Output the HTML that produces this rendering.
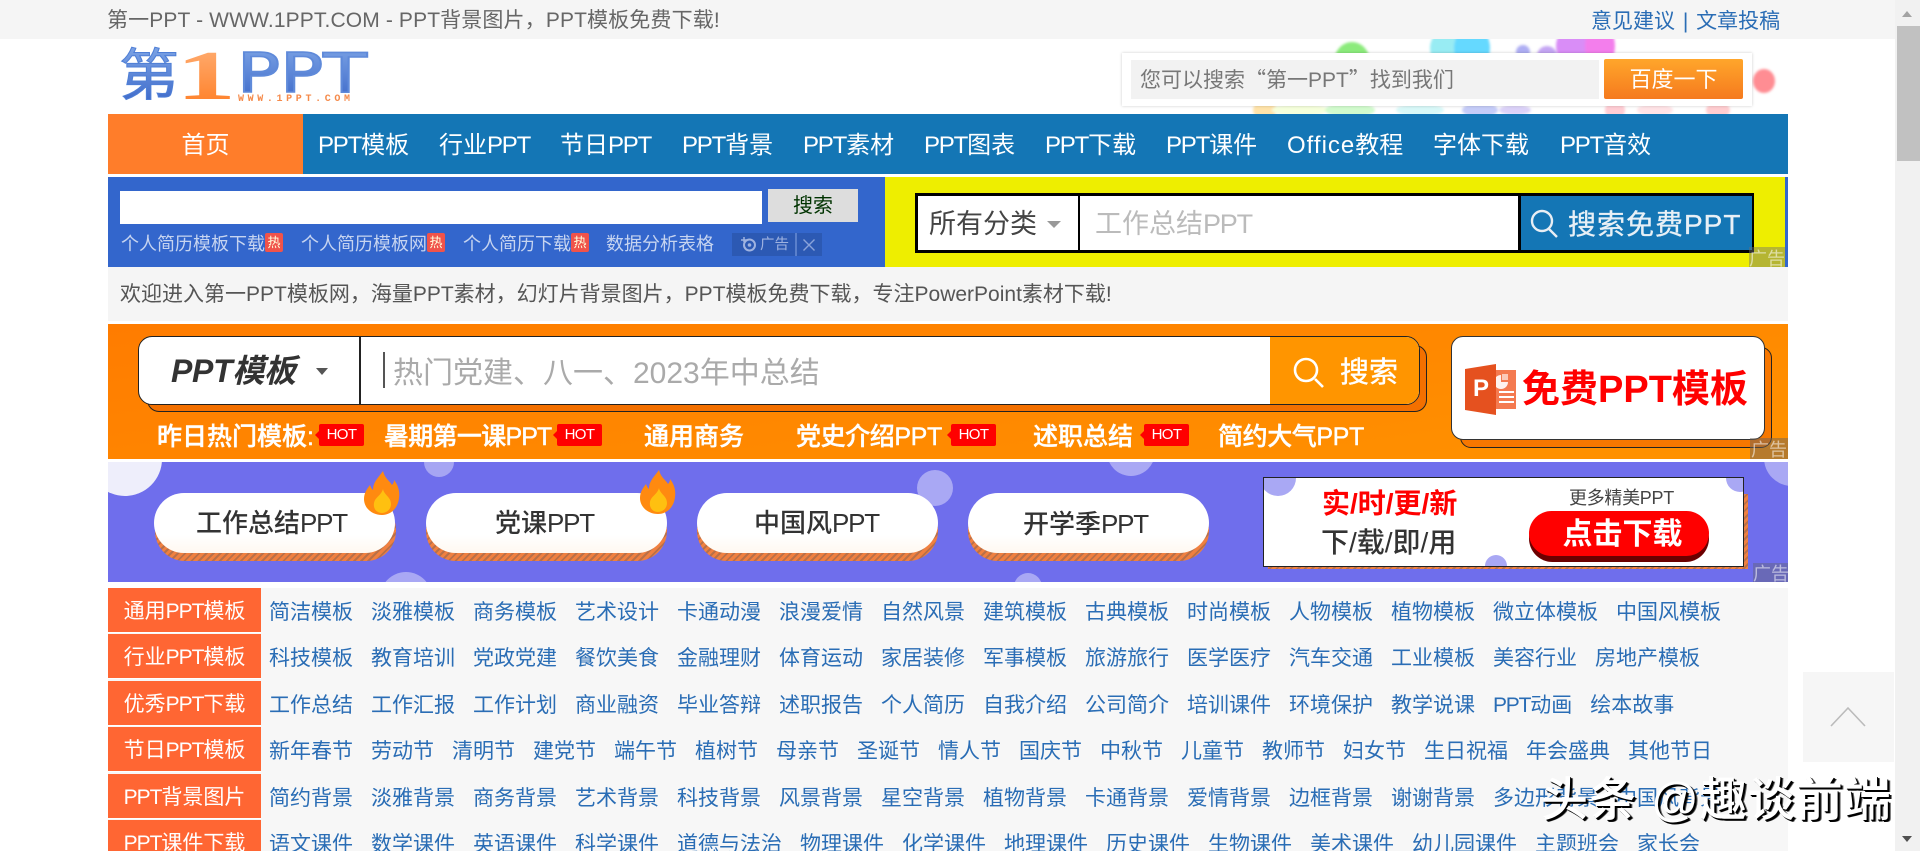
<!DOCTYPE html>
<html lang="zh-CN"><head><meta charset="utf-8"><title>第一PPT</title>
<style>
*{box-sizing:border-box;margin:0;padding:0}
html,body{width:1920px;height:851px;overflow:hidden;background:#fff}
body{position:relative;font-family:"Liberation Sans","Noto Sans CJK SC",sans-serif;font-size:21px;color:#555}
.b{position:absolute}
.t{position:absolute;line-height:40px;margin-top:-19px;white-space:nowrap}
u{text-decoration:none;letter-spacing:-1.2px}
.nav{color:#fff;font-size:24px}
.hot{position:absolute;width:45px;height:22px;top:424px;background:#f00;border-radius:2px;color:#fff;font-size:15px;line-height:22px;text-align:center;letter-spacing:-.6px}
.hot:before{content:"";position:absolute;left:-4px;top:7px;border:4px solid transparent;border-left:0;border-right-color:#f00}
.h{color:#fff;font-size:25px;font-weight:500;margin-top:-18px;-webkit-text-stroke:.4px #fff}
.ad{position:absolute;background:rgba(110,110,110,.45);color:rgba(255,255,255,.55);font-size:18px;overflow:hidden;text-align:center;white-space:nowrap}
.base{position:absolute;height:61px;top:500px;width:241px;border-radius:30px;background:repeating-linear-gradient(135deg,#f08040 0 3px,#b97048 3px 5px)}
.pill{position:absolute;height:60px;top:493px;width:241px;border-radius:30px;background:linear-gradient(#fff 70%,#fff8f0)}
.pt{color:#333;font-size:26px;font-weight:500}
.row{position:absolute;left:108px;width:1680px;height:46px;background:#f7f7f7;overflow:hidden}
.lab{position:absolute;left:0;top:0;width:153px;height:45px;background:#ff6633;color:#fff;font-size:21px;line-height:48px;text-align:center;border-bottom:1px solid #fff}
.lab u{letter-spacing:-1px}
.ls{position:absolute;left:161px;top:0;display:flex;gap:18px;line-height:49px;color:#2a6db5;white-space:nowrap}
.lnk{color:#c6d4f0;font-size:18px}
.cq{font-family:"Noto Sans CJK SC",sans-serif}
</style></head><body>

<!-- top bar -->
<div class="b" style="left:0;top:0;width:1895px;height:39px;background:#f5f5f5"></div>
<div class="t" style="left:107px;top:20px;color:#666;letter-spacing:.13px">第一PPT - WWW.1PPT.COM - PPT背景图片，PPT模板免费下载!</div>
<div class="t" style="left:1591px;top:21px;color:#2a6db5">意见建议 <span style="margin:0 2px">|</span> 文章投稿</div>

<!-- logo -->
<svg class="b" style="left:108px;top:40px" width="280" height="70" viewBox="108 40 280 70">
<defs>
<linearGradient id="lb" x1="0" y1="0" x2="0" y2="1"><stop offset="0" stop-color="#7fa6e6"/><stop offset="1" stop-color="#3a66c8"/></linearGradient>
<linearGradient id="lo" x1="0" y1="0" x2="0" y2="1"><stop offset="0" stop-color="#ffb27a"/><stop offset="1" stop-color="#ff7a1e"/></linearGradient>
</defs>
<text x="119" y="95" font-size="56" font-weight="400" fill="url(#lb)" stroke="#4f7fd6" stroke-width="1" textLength="60" lengthAdjust="spacingAndGlyphs" font-family="Liberation Sans,Noto Sans CJK SC,sans-serif">第</text>
<text x="176" y="99" font-size="70" font-weight="700" fill="url(#lo)" textLength="60" lengthAdjust="spacingAndGlyphs" font-family="Liberation Serif,serif">1</text>
<text x="237" y="92" font-size="54" font-weight="400" fill="url(#lb)" stroke="#5f8ada" stroke-width="1.6" textLength="130" lengthAdjust="spacingAndGlyphs" font-family="DejaVu Sans,sans-serif">PPT</text>
<text x="238" y="101" font-size="10" font-weight="700" fill="#f58a4a" textLength="112" font-family="Liberation Mono,monospace">WWW.1PPT.COM</text>
</svg>

<!-- colorful blobs -->
<svg class="b" style="left:1200px;top:39px" width="600" height="75" viewBox="1200 39 600 75">
<defs><filter id="f" x="-5%" y="-20%" width="110%" height="140%"><feGaussianBlur stdDeviation="1.2"/></filter></defs>
<g filter="url(#f)">
<g opacity=".8">
<ellipse cx="1352" cy="62" rx="18" ry="20" fill="#6fe65a"/>
<ellipse cx="1450" cy="48" rx="20" ry="20" fill="#7fe8f0"/><ellipse cx="1472" cy="48" rx="18" ry="22" fill="#3fd0ff"/>
<circle cx="1523" cy="52" r="7" fill="#9a9af0"/><circle cx="1547" cy="56" r="10" fill="#b68ff0"/>
<ellipse cx="1572" cy="46" rx="16" ry="19" fill="#d070f5"/><ellipse cx="1600" cy="46" rx="15" ry="22" fill="#f060e8"/>
<ellipse cx="1764" cy="81" rx="11" ry="12" fill="#ff7078"/>
</g>
<g opacity=".45">
<ellipse cx="1265" cy="110" rx="12" ry="9" fill="#ffc040"/><ellipse cx="1300" cy="110" rx="28" ry="6" fill="#e8ffb0"/>
<ellipse cx="1350" cy="110" rx="25" ry="7" fill="#9af590"/><ellipse cx="1420" cy="110" rx="24" ry="6" fill="#a8f0f0"/>
<ellipse cx="1480" cy="110" rx="18" ry="7" fill="#7f8ff0"/><ellipse cx="1515" cy="110" rx="16" ry="5" fill="#b09af0"/>
<ellipse cx="1615" cy="110" rx="10" ry="9" fill="#ff90a0"/><ellipse cx="1655" cy="110" rx="18" ry="6" fill="#ffc0c8"/>
<ellipse cx="1718" cy="110" rx="12" ry="8" fill="#ff9098"/>
</g>
</g></svg>

<!-- baidu box -->
<div class="b" style="left:1122px;top:53px;width:630px;height:53px;background:#fff;box-shadow:0 0 3px rgba(0,0,0,.2)"></div>
<div class="b" style="left:1131px;top:60px;width:468px;height:39px;background:#f2f2f2"></div>
<div class="t" style="left:1140px;top:78px;color:#777">您可以搜索<span class="cq">“</span>第一PPT<span class="cq">”</span>找到我们</div>
<div class="b" style="left:1604px;top:59px;width:139px;height:40px;background:linear-gradient(#ffa62b,#f57a1e);border-radius:2px;color:#fff;font-size:22px;line-height:42px;text-align:center">百度一下</div>

<!-- nav -->
<div class="b" style="left:108px;top:114px;width:1680px;height:60px;background:#1476b5"></div>
<div class="b" style="left:108px;top:114px;width:195px;height:60px;background:#ff7d2a;color:#fff;font-size:24px;line-height:63px;text-align:center">首页</div>
<div class="t nav" style="left:318px;top:145px"><u>PPT</u>模板</div>
<div class="t nav" style="left:439px;top:145px">行业<u>PPT</u></div>
<div class="t nav" style="left:560px;top:145px">节日<u>PPT</u></div>
<div class="t nav" style="left:682px;top:145px"><u>PPT</u>背景</div>
<div class="t nav" style="left:803px;top:145px"><u>PPT</u>素材</div>
<div class="t nav" style="left:924px;top:145px"><u>PPT</u>图表</div>
<div class="t nav" style="left:1045px;top:145px"><u>PPT</u>下载</div>
<div class="t nav" style="left:1166px;top:145px"><u>PPT</u>课件</div>
<div class="t nav" style="left:1287px;top:145px"><span style="letter-spacing:1px">Office</span>教程</div>
<div class="t nav" style="left:1433px;top:145px">字体下载</div>
<div class="t nav" style="left:1560px;top:145px"><u>PPT</u>音效</div>

<!-- search row -->
<div class="b" style="left:108px;top:177px;width:1680px;height:90px;background:#3366cc"></div>
<div class="b" style="left:885px;top:177px;width:900px;height:90px;background:#eeee00"></div>
<div class="b" style="left:120px;top:191px;width:642px;height:33px;background:#fff"></div>
<div class="b" style="left:768px;top:189px;width:90px;height:33px;background:#ddd;color:#030;font-size:20px;line-height:35px;text-align:center">搜索</div>
<div class="t lnk" style="left:121px;top:243px">个人简历模板下载</div>
<div class="b" style="left:265px;top:233px;width:18px;height:19px;background:#f0534a;color:#ffd;font-size:13px;line-height:19px;text-align:center;border-radius:2px">热</div>
<div class="t lnk" style="left:301px;top:243px">个人简历模板网</div>
<div class="b" style="left:427px;top:233px;width:18px;height:19px;background:#f0534a;color:#ffd;font-size:13px;line-height:19px;text-align:center;border-radius:2px">热</div>
<div class="t lnk" style="left:463px;top:243px">个人简历下载</div>
<div class="b" style="left:571px;top:233px;width:18px;height:19px;background:#f0534a;color:#ffd;font-size:13px;line-height:19px;text-align:center;border-radius:2px">热</div>
<div class="t lnk" style="left:606px;top:243px">数据分析表格</div>
<div class="b" style="left:732px;top:233px;width:90px;height:23px;background:#2c59b3"></div>
<svg class="b" style="left:740px;top:236px" width="18" height="17"><circle cx="9.5" cy="9" r="5.5" fill="none" stroke="#9fb3e0" stroke-width="2"/><circle cx="9.5" cy="9" r="1.8" fill="#9fb3e0"/><path d="M1 4h6M4 1v5" stroke="#9fb3e0" stroke-width="1.5"/></svg>
<div class="t" style="left:760px;top:244px;font-size:14.5px;color:#9fb3e0">广告</div>
<div class="b" style="left:795px;top:233px;width:2px;height:23px;background:#5a80cc"></div>
<svg class="b" style="left:802px;top:238px" width="14" height="14"><path d="M1.5 1.5l11 11M12.5 1.5l-11 11" stroke="#8aa3da" stroke-width="1.4"/></svg>

<!-- yellow search -->
<div class="b" style="left:915px;top:193px;width:839px;height:60px;background:#000"></div>
<div class="b" style="left:918px;top:196px;width:160px;height:54px;background:#fff"></div>
<div class="b" style="left:1080px;top:196px;width:438px;height:54px;background:#fff"></div>
<div class="b" style="left:1521px;top:196px;width:231px;height:54px;background:#1476b5"></div>
<div class="t" style="left:929px;top:223px;font-size:27px;color:#444">所有分类</div>
<div class="b" style="left:1047px;top:221px;border:7px solid transparent;border-top:7px solid #999;border-bottom:0"></div>
<div class="t" style="left:1095px;top:223px;font-size:27px;color:#bbb">工作总结<u>PPT</u></div>
<svg class="b" style="left:1530px;top:209px" width="30" height="30" fill="none" stroke="#e8eef4" stroke-width="2.4"><circle cx="12" cy="12" r="10"/><path d="M19 20l8 8"/></svg>
<div class="t" style="left:1568px;top:224px;font-size:28px;color:#e8f0f6;letter-spacing:1px;-webkit-text-stroke:.3px #e8f0f6">搜索免费PPT</div>
<div class="ad" style="left:1749px;top:247px;width:36px;height:20px;line-height:24px">广告</div>

<!-- welcome -->
<div class="b" style="left:108px;top:267px;width:1680px;height:54px;background:#f5f5f5"></div>
<div class="t" style="left:120px;top:294px">欢迎进入第一PPT模板网，海量PPT素材，幻灯片背景图片，PPT模板免费下载，专注PowerPoint素材下载!</div>

<!-- orange banner -->
<div class="b" style="left:108px;top:324px;width:1680px;height:135px;background:linear-gradient(172deg,#ff7c00,#ff9200)"></div>
<div class="b" style="left:147px;top:345px;width:1280px;height:67px;background:#f37000;border:1.5px solid #222;border-radius:12px"></div>
<div class="b" style="left:138px;top:336px;width:1282px;height:69px;background:#fff;border:1.5px solid #222;border-radius:14px;overflow:hidden">
  <div class="b" style="left:1131px;top:0;width:151px;height:69px;background:#ff9500"></div>
  <div class="b" style="left:220px;top:0;width:1.5px;height:69px;background:#222"></div>
</div>
<div class="t" style="left:171px;top:370px;font-size:32px;font-style:italic;font-weight:700;color:#333;letter-spacing:-.3px">PPT模板</div>
<div class="b" style="left:316px;top:368px;border:6px solid transparent;border-top:7px solid #555;border-bottom:0"></div>
<div class="b" style="left:383px;top:352px;width:1.5px;height:36px;background:#555"></div>
<div class="t" style="left:393px;top:373px;font-size:30px;color:#aaa">热门党建、八一、2023年中总结</div>
<svg class="b" style="left:1291px;top:356px" width="36" height="32" fill="none" stroke="#fff" stroke-width="2.6"><circle cx="15" cy="14" r="11"/><path d="M24 23l8 8"/></svg>
<div class="t" style="left:1340px;top:372px;font-size:29px;color:#fff;-webkit-text-stroke:.4px #fff">搜索</div>

<div class="t h" style="left:157px;top:435px">昨日热门模板:</div>
<div class="hot" style="left:319px">HOT</div>
<div class="t h" style="left:384px;top:435px;letter-spacing:-.7px">暑期第一课<u style="letter-spacing:-1px">PPT</u></div>
<div class="hot" style="left:557px">HOT</div>
<div class="t h" style="left:644px;top:435px">通用商务</div>
<div class="t h" style="left:796px;top:435px;letter-spacing:-.4px">党史介绍PPT</div>
<div class="hot" style="left:951px">HOT</div>
<div class="t h" style="left:1033px;top:435px">述职总结</div>
<div class="hot" style="left:1144px">HOT</div>
<div class="t h" style="left:1218px;top:435px;letter-spacing:-.4px">简约大气PPT</div>

<div class="b" style="left:1460px;top:347px;width:312px;height:101px;background:#f77700;border:1.5px solid #222;border-radius:11px"></div>
<div class="b" style="left:1451px;top:336px;width:314px;height:104px;background:#fff;border:1.5px solid #333;border-radius:12px"></div>
<svg class="b" style="left:1465px;top:364px" width="52" height="52">
<rect x="31" y="6" width="20" height="39" fill="#f47a50"/>
<path d="M36 11a7 7 0 1 0 7 7h-7z" fill="#fff" opacity=".9"/><path d="M37 10h6v6h-6z" fill="#fff" opacity=".6"/>
<path d="M34 28h15M34 33h15M34 38h15" stroke="#fff" stroke-width="2"/>
<path d="M0 5L31 0V51L0 46z" fill="#e5511f"/>
</svg>
<div class="t" style="left:1473px;top:388px;font-size:24px;font-weight:700;color:#fff">P</div>
<div class="t" style="left:1522px;top:389px;font-size:38px;font-weight:700;color:#f00">免费PPT模板</div>
<div class="ad" style="left:1750px;top:438px;width:38px;height:21px;line-height:24px;background:rgba(110,100,90,.5)">广告</div>

<!-- purple banner -->
<div class="b" style="left:108px;top:462px;width:1680px;height:120px;background:#6f6eec;overflow:hidden">
  <svg width="1680" height="120" viewBox="108 462 1680 120" style="position:absolute;left:0;top:0">
  <circle cx="125" cy="459" r="37" fill="#eeeefb"/>
  <circle cx="439" cy="462" r="15" fill="#a6a5f3"/>
  <circle cx="935" cy="488" r="18" fill="#a9a8f4"/>
  <circle cx="406" cy="598" r="26" fill="#a9a8f4"/>
  <circle cx="1131" cy="452" r="24" fill="#a9a8f4"/>
  <circle cx="1028" cy="587" r="14" fill="#a9a8f4"/>
  <circle cx="1792" cy="458" r="28" fill="#a9a8f4"/>
  </svg>
</div>
<div class="base" style="left:155px"></div><div class="pill" style="left:154px"></div>
<div class="base" style="left:426px"></div><div class="pill" style="left:426px"></div>
<div class="base" style="left:697px"></div><div class="pill" style="left:697px"></div>
<div class="base" style="left:968px"></div><div class="pill" style="left:968px"></div>
<div class="t pt" style="left:196px;top:522px">工作总结<u>PPT</u></div>
<div class="t pt" style="left:495px;top:522px">党课<u>PPT</u></div>
<div class="t pt" style="left:754px;top:522px">中国风<u>PPT</u></div>
<div class="t pt" style="left:1023px;top:523px">开学季<u>PPT</u></div>
<svg class="b" style="left:364px;top:471px" width="36" height="44"><path d="M19 0C21 8 26 10 28 14C30 12 30 10 30 9C34 14 36 20 35 27C34 37 27 44 18 44C8 44 0 37 0 28C0 22 3 18 6 14C7 17 8 18 9 19C9 11 14 7 19 0Z" fill="#ff8a10"/><path d="M19 18C20 24 27 26 27 33C27 39 22 42 18 42C13 42 9 38 10 32C11 26 17 25 19 18Z" fill="#ffc010"/></svg>
<svg class="b" style="left:640px;top:470px" width="36" height="44"><path d="M19 0C21 8 26 10 28 14C30 12 30 10 30 9C34 14 36 20 35 27C34 37 27 44 18 44C8 44 0 37 0 28C0 22 3 18 6 14C7 17 8 18 9 19C9 11 14 7 19 0Z" fill="#ff8a10"/><path d="M19 18C20 24 27 26 27 33C27 39 22 42 18 42C13 42 9 38 10 32C11 26 17 25 19 18Z" fill="#ffc010"/></svg>

<div class="b" style="left:1268px;top:494px;width:480px;height:75px;background:repeating-linear-gradient(135deg,#f08040 0 3px,#b97048 3px 5px)"></div>
<div class="b" style="left:1263px;top:477px;width:481px;height:90px;background:#fff;border:1.5px solid #222;overflow:hidden">
  <svg width="480" height="90" viewBox="1264 478 480 90" style="position:absolute;left:0;top:0">
  <circle cx="1278" cy="478" r="18" fill="#a9a8f4"/>
  <circle cx="1740" cy="478" r="14" fill="#a9a8f4"/>
  <circle cx="1496" cy="566" r="11" fill="#a9a8f4"/>
  </svg>
</div>
<div class="t" style="left:1322px;top:503px;font-size:28px;font-weight:700;color:#f00">实/时/更/新</div>
<div class="t" style="left:1321px;top:542px;font-size:28px;font-weight:500;color:#333">下/载/即/用</div>
<div class="t" style="left:1569px;top:497px;font-size:18px;color:#444;letter-spacing:-.3px">更多精美PPT</div>
<div class="b" style="left:1529px;top:515px;width:180px;height:47px;background:#6b0000;border-radius:24px"></div>
<div class="b" style="left:1529px;top:511px;width:180px;height:45px;background:#f00;border-radius:23px;color:#fff;font-size:30px;font-weight:700;line-height:48px;text-align:center;padding-left:7px">点击下载</div>
<div class="ad" style="left:1753px;top:563px;width:35px;height:19px;line-height:23px;background:rgba(100,100,130,.5)">广告</div>

<!-- list -->
<div class="b" style="left:108px;top:582px;width:1680px;height:6px;background:#fff"></div>
<div class="row" style="top:588px"><div class="lab">通用<u>PPT</u>模板</div><div class="ls"><a>简洁模板</a><a>淡雅模板</a><a>商务模板</a><a>艺术设计</a><a>卡通动漫</a><a>浪漫爱情</a><a>自然风景</a><a>建筑模板</a><a>古典模板</a><a>时尚模板</a><a>人物模板</a><a>植物模板</a><a>微立体模板</a><a>中国风模板</a></div></div>
<div class="row" style="top:634px;height:47px"><div class="lab">行业<u>PPT</u>模板</div><div class="ls"><a>科技模板</a><a>教育培训</a><a>党政党建</a><a>餐饮美食</a><a>金融理财</a><a>体育运动</a><a>家居装修</a><a>军事模板</a><a>旅游旅行</a><a>医学医疗</a><a>汽车交通</a><a>工业模板</a><a>美容行业</a><a>房地产模板</a></div></div>
<div class="row" style="top:681px"><div class="lab">优秀<u>PPT</u>下载</div><div class="ls"><a>工作总结</a><a>工作汇报</a><a>工作计划</a><a>商业融资</a><a>毕业答辩</a><a>述职报告</a><a>个人简历</a><a>自我介绍</a><a>公司简介</a><a>培训课件</a><a>环境保护</a><a>教学说课</a><a><u>PPT</u>动画</a><a>绘本故事</a></div></div>
<div class="row" style="top:727px;height:47px"><div class="lab">节日<u>PPT</u>模板</div><div class="ls"><a>新年春节</a><a>劳动节</a><a>清明节</a><a>建党节</a><a>端午节</a><a>植树节</a><a>母亲节</a><a>圣诞节</a><a>情人节</a><a>国庆节</a><a>中秋节</a><a>儿童节</a><a>教师节</a><a>妇女节</a><a>生日祝福</a><a>年会盛典</a><a>其他节日</a></div></div>
<div class="row" style="top:774px"><div class="lab"><u>PPT</u>背景图片</div><div class="ls"><a>简约背景</a><a>淡雅背景</a><a>商务背景</a><a>艺术背景</a><a>科技背景</a><a>风景背景</a><a>星空背景</a><a>植物背景</a><a>卡通背景</a><a>爱情背景</a><a>边框背景</a><a>谢谢背景</a><a>多边形背景</a><a>中国风背景</a></div></div>
<div class="row" style="top:820px"><div class="lab"><u>PPT</u>课件下载</div><div class="ls"><a>语文课件</a><a>数学课件</a><a>英语课件</a><a>科学课件</a><a>道德与法治</a><a>物理课件</a><a>化学课件</a><a>地理课件</a><a>历史课件</a><a>生物课件</a><a>美术课件</a><a>幼儿园课件</a><a>主题班会</a><a>家长会</a></div></div>

<!-- back to top -->
<div class="b" style="left:1803px;top:672px;width:91px;height:90px;background:#f6f6f6"></div>
<svg class="b" style="left:1830px;top:706px" width="36" height="22" fill="none" stroke="#bbb" stroke-width="1.6"><path d="M1 20L18 2L35 20"/></svg>

<!-- scrollbar -->
<div class="b" style="left:1895px;top:0;width:25px;height:851px;background:#f1f1f1"></div>
<div class="b" style="left:1897px;top:26px;width:23px;height:135px;background:#c1c1c1"></div>
<div class="b" style="left:1902px;top:11px;border:5.5px solid transparent;border-bottom:6px solid #a3a3a3;border-top:0"></div>
<div class="b" style="left:1902px;top:836px;border:5.5px solid transparent;border-top:6px solid #505050;border-bottom:0"></div>

<!-- watermark -->
<div class="t" style="left:1541px;top:800px;font-size:47px;line-height:50px;margin-top:-25px;color:#fff;font-weight:500;letter-spacing:1px;text-shadow:1px 1px 0 #000,2px 2px 0 #000,3px 2px 0 rgba(0,0,0,.6)">头条 @趣谈前端</div>

</body></html>
